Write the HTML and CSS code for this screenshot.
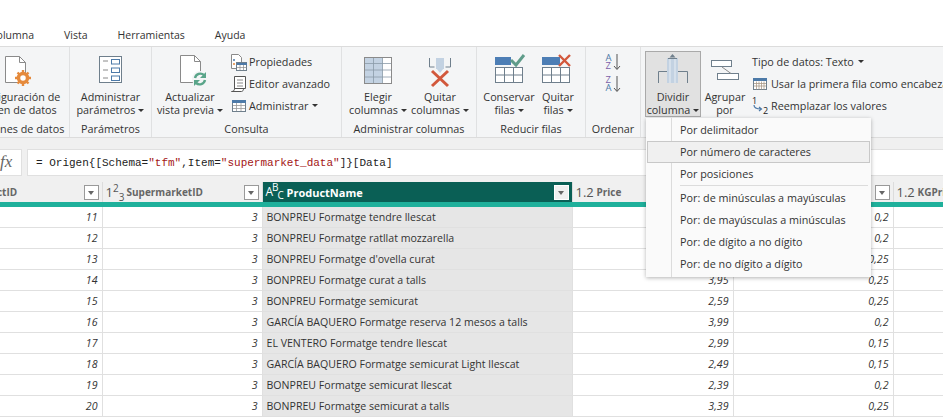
FILE: index.html
```html
<!DOCTYPE html>
<html lang="es">
<head>
    <meta charset="UTF-8">
    <meta name="viewport" content="width=device-width, initial-scale=1.0">
    <title>Power Query</title>
    <link rel="stylesheet" href="styles.css">
</head>
<body>
    <nav class="tabs">
        <a href="#" class="tab-first">Columna</a>
        <a href="#">Vista</a>
        <a href="#">Herramientas</a>
        <a href="#">Ayuda</a>
    </nav>

    <div class="ribbon">
        <!-- Opciones de datos (cut off on the left) -->
        <section class="group group-data">
            <div class="group-body">
                <div class="big-btn w-full">
                    <svg class="icon" width="40" height="36" viewBox="0 0 40 36"><path d="M7.5 4.5h14l6 6v20h-20z" fill="#fff" stroke="#8a8a8a"/><path d="M21.5 4.5v6h6" fill="none" stroke="#8a8a8a"/><circle cx="25" cy="26" r="4.5" fill="#fff" stroke="#e58a3c" stroke-width="3.5"/><path d="M25 18v3M25 31v3M17 26h3M30 26h3M19.5 20.5l2 2M28.5 29.5l2 2M19.5 31.5l2-2M28.5 22.5l2-2" stroke="#e58a3c" stroke-width="2.4"/></svg>
                    <span>Configuración de<br>origen de datos</span>
                </div>
            </div>
            <div class="group-label">Opciones de datos</div>
        </section>

        <section class="group group-params">
            <div class="group-body">
                <div class="big-btn w-full">
                    <svg class="icon" width="40" height="36" viewBox="0 0 40 36"><rect x="8.5" y="4.5" width="22" height="26" fill="#fff" stroke="#6f7f8c"/><path d="M12 9h5M12 18h5M12 26h5" stroke="#8a8a8a"/><rect x="20.5" y="7.5" width="8" height="4.5" fill="#fff" stroke="#4d7aa8"/><rect x="20.5" y="16" width="8" height="4.5" fill="#fff" stroke="#4d7aa8"/><rect x="20.5" y="24" width="8" height="4.5" fill="#fff" stroke="#4d7aa8"/></svg>
                    <span>Administrar<br>parámetros<i class="caret"></i></span>
                </div>
            </div>
            <div class="group-label">Parámetros</div>
        </section>

        <section class="group group-query">
            <div class="group-body body-start">
                <div class="big-btn w-preview">
                    <svg class="icon" width="40" height="36" viewBox="0 0 40 36"><path d="M10.5 3.5h14l6 6v21h-20z" fill="#fff" stroke="#8a8a8a"/><path d="M24.5 3.5v6h6" fill="none" stroke="#8a8a8a"/><circle cx="30" cy="27" r="8" fill="#f4f5f6"/><path d="M25 26a5.5 5.5 0 0 1 9-3" fill="none" stroke="#5aa58a" stroke-width="2.4"/><path d="M36 20v6h-6z" fill="#5aa58a"/><path d="M35 28a5.5 5.5 0 0 1-9 3" fill="none" stroke="#5aa58a" stroke-width="2.4"/><path d="M24 34v-6h6z" fill="#5aa58a"/></svg>
                    <span>Actualizar<br>vista previa<i class="caret"></i></span>
                </div>
                <div class="small-list">
                    <div class="small-btn">
                        <svg width="18" height="18" viewBox="0 0 18 18"><path d="M1.5 1.5h7l3 3v11h-10z" fill="#fff" stroke="#8a8a8a"/><circle cx="4" cy="7" r="1" fill="#4d7aa8"/><circle cx="4" cy="11" r="1" fill="#e58a3c"/><rect x="6.5" y="9.5" width="10" height="8" fill="#fff" stroke="#6f7f8c"/><path d="M7 11h10" stroke="#4d7aa8" stroke-width="2"/><path d="M10 12v5M13.5 12v5M7 14.5h10" stroke="#8a8a8a" stroke-width=".7"/></svg>
                        Propiedades
                    </div>
                    <div class="small-btn">
                        <svg width="18" height="18" viewBox="0 0 18 18"><path d="M4.5 1.5h11v12h-11zM4.5 13.5c0 2-1 3-3 3h10c1 0 2-1 2-3z" fill="#fff" stroke="#555"/><path d="M7 5h6M7 8h6M7 11h6" stroke="#888"/></svg>
                        Editor avanzado
                    </div>
                    <div class="small-btn">
                        <svg width="18" height="18" viewBox="0 0 18 18"><rect x="2.5" y="3.5" width="13" height="11" fill="#fff" stroke="#6f7f8c"/><path d="M2 4.5h14" stroke="#4d7aa8" stroke-width="3"/><path d="M6.5 6v8M11 6v8M3 8.5h12M3 11.5h12" stroke="#999" stroke-width=".8"/></svg>
                        Administrar<i class="caret"></i>
                    </div>
                </div>
            </div>
            <div class="group-label">Consulta</div>
        </section>

        <section class="group group-cols">
            <div class="group-body">
                <div class="big-btn w-cols">
                    <svg class="icon" width="40" height="36" viewBox="0 0 40 36"><rect x="6.5" y="5.5" width="27" height="26" fill="#fff" stroke="#8a8a8a"/><rect x="7" y="6" width="17.5" height="25" fill="#c3d2e2"/><path d="M15.5 6v25M24.5 6v25M7 11.5h26M7 18h26M7 25h26" stroke="#8a9aa8" stroke-width=".8"/></svg>
                    <span>Elegir<br>columnas<i class="caret"></i></span>
                </div>
                <div class="big-btn w-cols">
                    <svg class="icon" width="40" height="36" viewBox="0 0 40 36"><path d="M9.5 6v9h5M30.5 6v9h-5" fill="none" stroke="#6f7f8c"/><rect x="16" y="6" width="8" height="11" fill="#c3d2e2"/><path d="M20 21l-4-5h8z" fill="#c3d2e2"/><path d="M12 19l16 15M28 19L12 34" stroke="#d2583c" stroke-width="3"/></svg>
                    <span>Quitar<br>columnas<i class="caret"></i></span>
                </div>
            </div>
            <div class="group-label">Administrar columnas</div>
        </section>

        <section class="group group-rows">
            <div class="group-body body-rows">
                <div class="big-btn w-keep">
                    <svg class="icon" width="40" height="36" viewBox="0 0 40 36"><rect x="6" y="5" width="28" height="8" fill="#4d7eb5"/><rect x="6.5" y="15.5" width="27" height="15" fill="#fff" stroke="#6f7f8c"/><path d="M15.5 15v16M24.5 15v16M6 23h28" stroke="#6f7f8c"/><path d="M22 3h14v11H22z" fill="#f4f5f6"/><path d="M22 8l5 5 8-10" fill="none" stroke="#5f9c8a" stroke-width="3"/></svg>
                    <span>Conservar<br>filas<i class="caret"></i></span>
                </div>
                <div class="big-btn w-drop">
                    <svg class="icon" width="40" height="36" viewBox="0 0 40 36"><rect x="4" y="5" width="18" height="8" fill="#4d7eb5"/><rect x="4.5" y="15.5" width="27" height="15" fill="#fff" stroke="#6f7f8c"/><path d="M13.5 15v16M22.5 15v16M4 23h28" stroke="#6f7f8c"/><path d="M21 3l11 11M32 3L21 14" stroke="#d2583c" stroke-width="2.4"/></svg>
                    <span>Quitar<br>filas<i class="caret"></i></span>
                </div>
            </div>
            <div class="group-label">Reducir filas</div>
        </section>

        <section class="group group-sort">
            <div class="group-body">
                <div class="sort-list">
                    <div class="sort-btn"><span class="az"><b class="a">A</b><b class="z">Z</b></span><svg width="8" height="16" viewBox="0 0 8 16"><path d="M4 0v15M1 12l3 3.5L7 12" fill="none" stroke="#555"/></svg></div>
                    <div class="sort-btn"><span class="az"><b class="z">Z</b><b class="a">A</b></span><svg width="8" height="16" viewBox="0 0 8 16"><path d="M4 0v15M1 12l3 3.5L7 12" fill="none" stroke="#555"/></svg></div>
                </div>
            </div>
            <div class="group-label">Ordenar</div>
        </section>

        <section class="group group-transform">
            <div class="group-body body-start">
                <div class="big-btn w-split active">
                    <svg class="icon" width="40" height="36" viewBox="0 0 40 36"><path d="M19.5 2l-3 3.5h6z" fill="#6f7f8c"/><rect x="14" y="6" width="11" height="25" fill="#c3d2e2"/><path d="M17 6v25M22 6v25" stroke="#e8eef4"/><path d="M14 19.5H5.5V31M25 19.5h9.5V31" fill="none" stroke="#6f7f8c"/><path d="M15 6.5h9" stroke="#6f7f8c"/></svg>
                    <span>Dividir<br>columna<i class="caret"></i></span>
                </div>
                <div class="big-btn w-group">
                    <svg class="icon" width="40" height="36" viewBox="0 0 40 36"><rect x="6.5" y="8.5" width="20" height="6" fill="#fff" stroke="#6f7f8c"/><rect x="12.5" y="21.5" width="21" height="6" fill="#fff" stroke="#6f7f8c"/><path d="M17 15l9 6.5" stroke="#8a8a8a"/></svg>
                    <span>Agrupar<br>por</span>
                </div>
                <div class="small-list wide">
                    <div class="small-btn">Tipo de datos: Texto<i class="caret"></i></div>
                    <div class="small-btn">
                        <svg width="18" height="18" viewBox="0 0 18 18"><rect x="1.5" y="3.5" width="13" height="11" fill="#fff" stroke="#6f7f8c"/><path d="M1 4.5h14" stroke="#4d7aa8" stroke-width="3"/><path d="M4.5 6.5v8M7 6.5v8M9.5 6.5v8M12 6.5v8M2 8.5h12M2 11h12" stroke="#a98" stroke-width=".8"/></svg>
                        Usar la primera fila como encabezado<i class="caret"></i>
                    </div>
                    <div class="small-btn">
                        <svg width="18" height="18" viewBox="0 0 18 18"><text x="0" y="7" font-size="9" fill="#222" font-family="Open Sans">1</text><text x="11" y="17" font-size="9" fill="#222" font-family="Open Sans">2</text><path d="M2 8c0 3 2 4 7 4M7 10l2.5 2L7 14" fill="none" stroke="#4d7aa8" stroke-width="1.2"/></svg>
                        Reemplazar los valores
                    </div>
                </div>
            </div>
        </section>
    </div>

    <div class="formula-row">
        <div class="fx-box">fx</div>
        <div class="formula-box">= Origen{[Schema=<span class="str">"tfm"</span>,Item=<span class="str">"supermarket_data"</span>]}[Data]</div>
    </div>

    <table class="grid">
        <colgroup>
            <col class="c-id"><col class="c-market"><col class="c-name"><col class="c-price"><col class="c-num"><col class="c-last">
        </colgroup>
        <thead>
            <tr>
                <th><span class="th-inner"><span class="th-name th-clip">ProductID</span><i class="filter"></i></span></th>
                <th><span class="th-inner"><span class="type">1<sup>2</sup><sub>3</sub></span><span class="th-name">SupermarketID</span><i class="filter"></i></span></th>
                <th class="selected"><span class="th-inner"><span class="type">A<sup>B</sup><sub>C</sub></span><span class="th-name">ProductName</span><i class="filter"></i></span></th>
                <th><span class="th-inner"><span class="type">1.2</span><span class="th-name">Price</span><i class="filter"></i></span></th>
                <th><span class="th-inner"><span class="th-name"></span><i class="filter"></i></span></th>
                <th><span class="th-inner"><span class="type">1.2</span><span class="th-name">KGPrice</span></span></th>
            </tr>
        </thead>
        <tbody>
            <tr><td>11</td><td>3</td><td class="text">BONPREU Formatge tendre llescat</td><td></td><td>0,2</td><td></td></tr>
            <tr><td>12</td><td>3</td><td class="text">BONPREU Formatge ratllat mozzarella</td><td></td><td>0,2</td><td></td></tr>
            <tr><td>13</td><td>3</td><td class="text">BONPREU Formatge d'ovella curat</td><td></td><td>0,25</td><td></td></tr>
            <tr><td>14</td><td>3</td><td class="text">BONPREU Formatge curat a talls</td><td>3,95</td><td>0,25</td><td></td></tr>
            <tr><td>15</td><td>3</td><td class="text">BONPREU Formatge semicurat</td><td>2,59</td><td>0,25</td><td></td></tr>
            <tr><td>16</td><td>3</td><td class="text">GARCÍA BAQUERO Formatge reserva 12 mesos a talls</td><td>3,99</td><td>0,2</td><td></td></tr>
            <tr><td>17</td><td>3</td><td class="text">EL VENTERO Formatge tendre llescat</td><td>2,99</td><td>0,15</td><td></td></tr>
            <tr><td>18</td><td>3</td><td class="text">GARCÍA BAQUERO Formatge semicurat Light llescat</td><td>2,49</td><td>0,15</td><td></td></tr>
            <tr><td>19</td><td>3</td><td class="text">BONPREU Formatge semicurat llescat</td><td>2,39</td><td>0,2</td><td></td></tr>
            <tr><td>20</td><td>3</td><td class="text">BONPREU Formatge semicurat a talls</td><td>3,39</td><td>0,25</td><td></td></tr>
        </tbody>
    </table>

    <!-- Dividir columna dropdown -->
    <ul class="menu">
        <li>Por delimitador</li>
        <li class="hover">Por número de caracteres</li>
        <li>Por posiciones</li>
        <li class="sep"></li>
        <li>Por: de minúsculas a mayúsculas</li>
        <li>Por: de mayúsculas a minúsculas</li>
        <li>Por: de dígito a no dígito</li>
        <li>Por: de no dígito a dígito</li>
    </ul>
</body>
</html>
```

FILE: styles.css
```css
/* CSS styles */
html, body {
    margin: 0;
    padding: 0;
    height: 420px;
    overflow: hidden;
}
body {
    position: relative;
    font-family: "Open Sans", "Noto Sans", sans-serif;
    font-size: 10.8px;
    color: #333;
    background-color: #fff;
}
.tabs {
    display: flex;
    gap: 30px;
    height: 46px;
    padding-top: 26px;
    box-sizing: border-box;
    font-size: 10.5px;
    line-height: 18px;
    overflow: hidden;
}
.tabs a {
    color: #333;
    text-decoration: none;
}
.tab-first {
    margin-left: -10px;
}
.ribbon {
    display: flex;
    height: 92px;
    box-sizing: border-box;
    background-color: #f4f5f6;
    border-top: 1px solid #dcdcdc;
    border-bottom: 1px solid #dcdcdc;
    overflow: hidden;
}
.group {
    display: flex;
    flex-direction: column;
    flex: none;
    box-sizing: border-box;
    height: 90px;
    border-right: 1px solid #e0e1e2;
}
.group-data { width: 104px; margin-left: -34px; }
.group-params { width: 82px; }
.group-query { width: 190px; }
.group-cols { width: 135px; }
.group-rows { width: 109px; }
.group-sort { width: 55px; }
.group-transform { flex: 1; border-right: none; }
.group-body {
    display: flex;
    flex: none;
    height: 73px;
    box-sizing: border-box;
    justify-content: center;
    padding-top: 5px;
}
.body-start {
    justify-content: flex-start;
}
.body-rows {
    justify-content: flex-start;
    padding-left: 2px;
}
.group-label {
    height: 17px;
    line-height: 18px;
    text-align: center;
    white-space: nowrap;
}
.big-btn {
    display: flex;
    flex-direction: column;
    align-items: center;
    flex: none;
    box-sizing: border-box;
    height: 66px;
    text-align: center;
    line-height: 13px;
    white-space: nowrap;
}
.big-btn .icon {
    flex: none;
    margin-bottom: 2px;
}
.w-full { width: 100%; }
.w-preview { width: 76px; }
.w-cols { width: 62px; }
.w-keep { width: 60px; }
.w-drop { width: 38px; }
.w-split { width: 56px; margin: -1px 0 0 4px; }
.w-group { width: 46px; margin-left: 1px; }
.active {
    background-color: #e1e1e1;
    border: 1px solid #a9a9a9;
}
.small-list {
    display: flex;
    flex-direction: column;
    gap: 3px;
    margin-left: 2px;
    width: 108px;
}
.small-list.wide {
    flex: 1;
    width: auto;
    margin-left: 4px;
    white-space: nowrap;
}
.small-btn {
    display: flex;
    align-items: center;
    gap: 1px;
    height: 19px;
    white-space: nowrap;
}
.caret {
    display: inline-block;
    width: 0;
    height: 0;
    margin-left: 3px;
    vertical-align: 2px;
    border-left: 3px solid transparent;
    border-right: 3px solid transparent;
    border-top: 3px solid #333;
}
.sort-list {
    display: flex;
    flex-direction: column;
    gap: 6px;
    padding-top: 2px;
}
.sort-btn {
    display: flex;
    align-items: flex-start;
    gap: 1px;
    height: 16px;
}
.az {
    display: flex;
    flex-direction: column;
    font-size: 9.5px;
    line-height: 8px;
}
.az b { font-weight: 400; }
.az .a { color: #4d7aa8; }
.az .z { color: #7a5ea8; }
.formula-row {
    display: flex;
    gap: 5px;
    height: 44px;
    padding: 11px 0 6px;
    box-sizing: border-box;
    background-color: #f0f0f0;
}
.fx-box {
    width: 22px;
    box-sizing: border-box;
    background-color: #fff;
    border: 1px solid #e0e0e0;
    border-left: none;
    font-family: "Liberation Serif", serif;
    font-style: italic;
    font-size: 17px;
    line-height: 24px;
    color: #666;
    text-align: right;
    padding-right: 10px;
}
.formula-box {
    flex: 1;
    background-color: #fff;
    border: 1px solid #e0e0e0;
    border-right: none;
    font-family: "Liberation Mono", monospace;
    font-size: 11px;
    line-height: 26px;
    padding-left: 8px;
    color: #222;
}
.str {
    color: #a31515;
}
.grid {
    table-layout: fixed;
    width: 945px;
    border-collapse: collapse;
}
.c-id { width: 102px; }
.c-market { width: 160px; }
.c-name { width: 310px; }
.c-price { width: 161px; }
.c-num { width: 160px; }
.c-last { width: 52px; }
.grid th {
    height: 20px;
    padding: 0;
    background-color: #f0f0f0;
    border-right: 1px solid #dcdcdc;
    border-bottom: 5px solid #1fb09b;
    font-size: 10px;
    font-weight: 700;
    color: #666;
    text-align: left;
}
.th-inner {
    display: flex;
    align-items: center;
    height: 20px;
    padding: 0 3px;
}
.th-name {
    flex: 1;
    white-space: nowrap;
}
.th-clip {
    margin-left: -36px;
}
.type {
    font-size: 13px;
    font-weight: 400;
    width: 21px;
    flex: none;
    line-height: 14px;
    white-space: nowrap;
    color: #555;
}
.type sup, .type sub {
    font-size: 10px;
    line-height: 0;
}
.grid th.selected {
    background-color: #0a5f55;
    color: #fff;
    font-size: 11px;
}
.selected .type {
    color: #fff;
    font-size: 12px;
    letter-spacing: -1px;
}
.selected .filter {
    border-color: #fff;
    background-color: #f0f0f0;
}
.filter {
    flex: none;
    position: relative;
    display: block;
    width: 15px;
    height: 15px;
    box-sizing: border-box;
    background-color: #fff;
    border: 1px solid #999;
}
.filter::after {
    content: "";
    position: absolute;
    left: 3px;
    top: 5px;
    border-left: 3.5px solid transparent;
    border-right: 3.5px solid transparent;
    border-top: 4px solid #666;
}
.grid td {
    height: 20px;
    padding: 0 4px;
    border-right: 1px solid #e0e0e0;
    border-bottom: 1px solid #e0e0e0;
    font-size: 10.6px;
    font-style: italic;
    text-align: right;
    white-space: nowrap;
    overflow: hidden;
}
.grid td.text {
    font-style: normal;
    text-align: left;
    background-color: #e6e6e6;
}
.menu {
    position: absolute;
    left: 646px;
    top: 118px;
    width: 225px;
    height: 159px;
    box-sizing: border-box;
    margin: 0;
    padding: 1px;
    list-style: none;
    background: linear-gradient(#dcdcdc, #dcdcdc) 25px 0 / 1px 100% no-repeat #fafafa;
    box-shadow: 0 1px 4px rgba(0, 0, 0, 0.3);
}
.menu li {
    box-sizing: border-box;
    height: 22px;
    padding-left: 33px;
    line-height: 20px;
    border: 1px solid transparent;
    border-left: none;
    white-space: nowrap;
}
.menu li.hover {
    background-color: #f0f0f0;
    border: 1px solid #c8c8c8;
    padding-left: 32px;
}
.menu li.sep {
    height: 1px;
    margin: 0 2px 1px 33px;
    padding: 0;
    border: none;
    background-color: #dcdcdc;
}
```
